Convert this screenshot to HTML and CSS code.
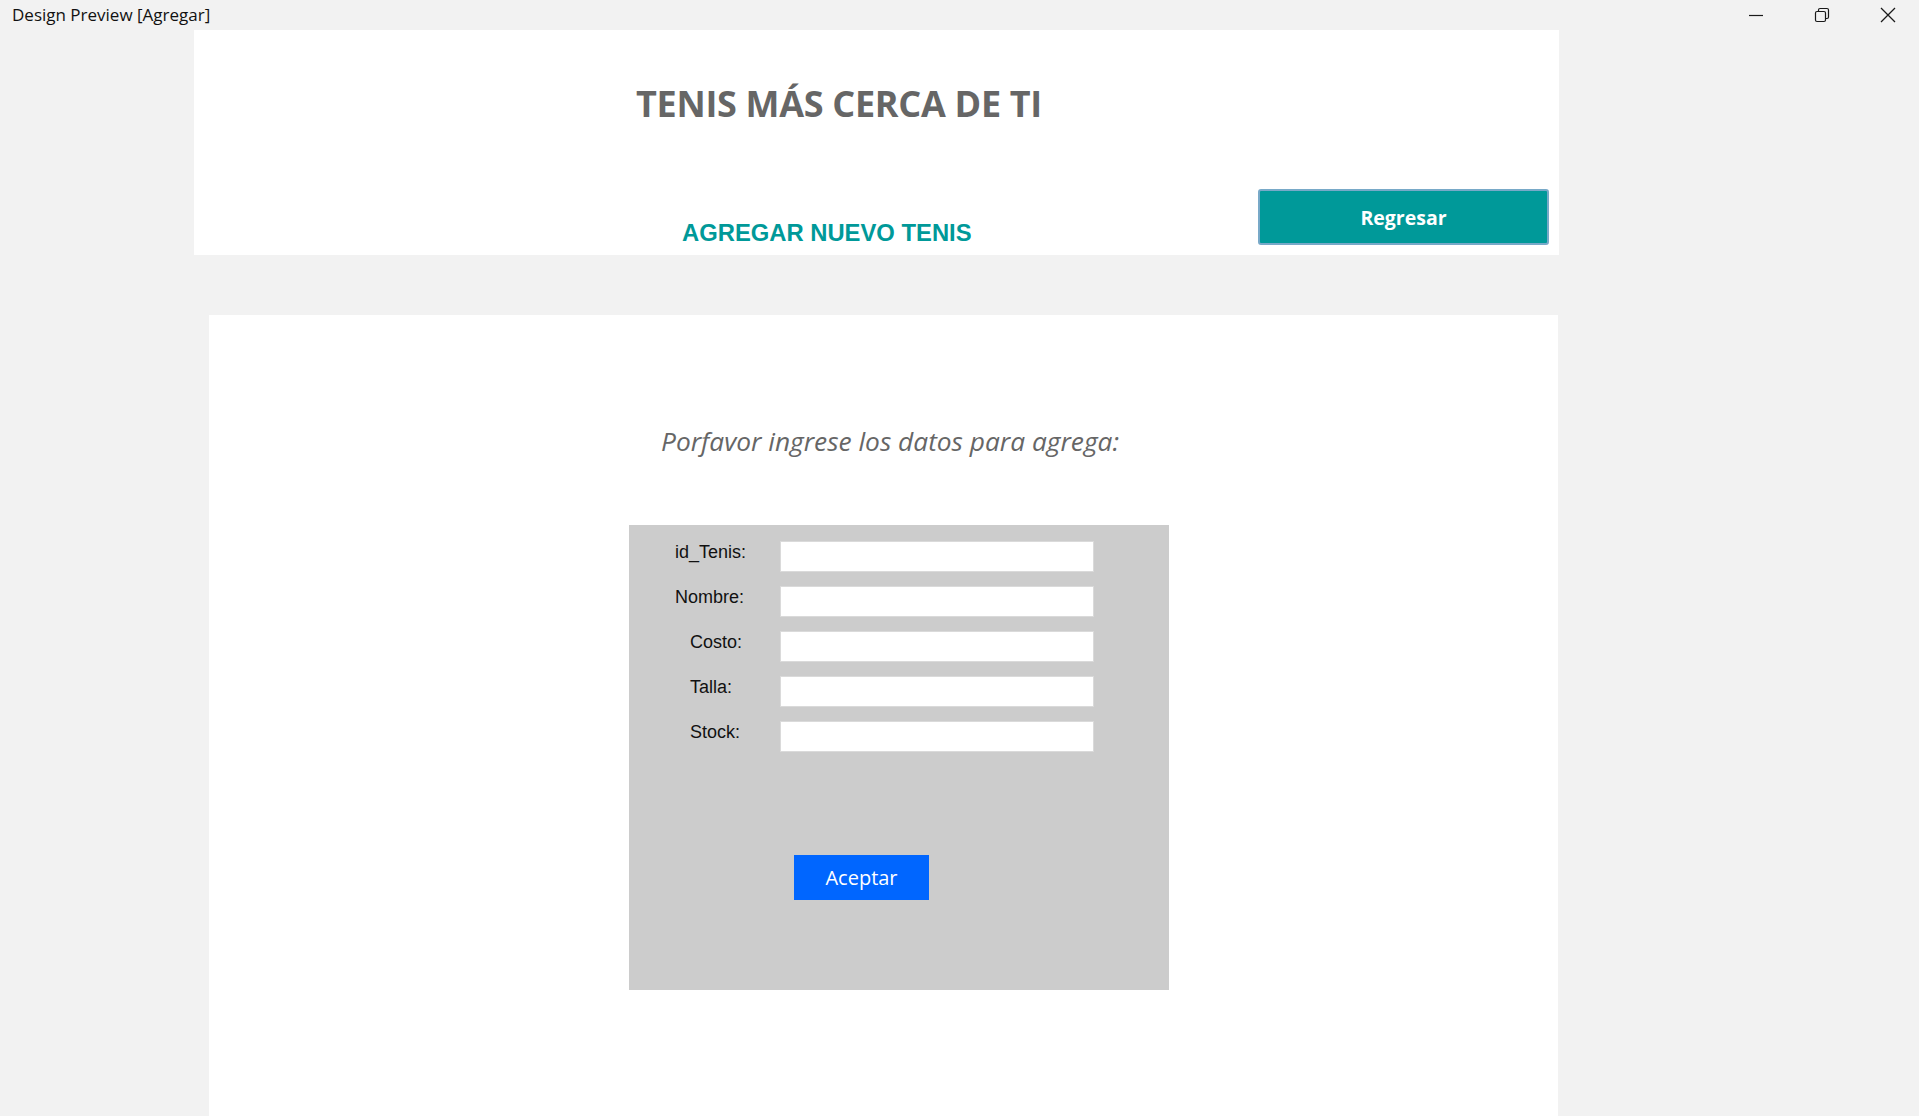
FILE: index.html
```html
<!DOCTYPE html>
<html lang="es">
<head>
<meta charset="utf-8">
<title>Design Preview [Agregar]</title>
<link rel="stylesheet" href="styles.css">
</head>
<body>
<div class="titlebar">
  <span class="titlebar-text">Design Preview [Agregar]</span>
  <div class="win-controls">
    <span class="win-btn">
      <svg width="16" height="16" viewBox="0 0 16 16"><path d="M1 8.5H15" stroke="#1a1a1a" stroke-width="1.2" fill="none"/></svg>
    </span>
    <span class="win-btn">
      <svg width="16" height="16" viewBox="0 0 16 16" fill="none" stroke="#1a1a1a" stroke-width="1.2"><rect x="1.5" y="4.5" width="10" height="10" rx="1.5"/><path d="M4.5 4.5V3a1.5 1.5 0 0 1 1.5-1.5h7A1.5 1.5 0 0 1 14.5 3v7a1.5 1.5 0 0 1-1.5 1.5h-1.5"/></svg>
    </span>
    <span class="win-btn">
      <svg width="16" height="16" viewBox="0 0 16 16"><path d="M1 1L15 15M15 1L1 15" stroke="#1a1a1a" stroke-width="1.3" fill="none"/></svg>
    </span>
  </div>
</div>

<header class="top-panel">
  <h1 class="main-title">TENIS MÁS CERCA DE TI</h1>
  <div class="top-row">
    <h2 class="sub-title">AGREGAR NUEVO TENIS</h2>
    <button class="btn-back" type="button">Regresar</button>
  </div>
</header>

<main class="content-panel">
  <p class="instructions">Porfavor ingrese los datos para agrega:</p>
  <form class="form-box">
    <div class="fields">
      <label class="field-label">id_Tenis:</label>
      <input class="field-input" type="text">
      <label class="field-label">Nombre:</label>
      <input class="field-input" type="text">
      <label class="field-label indent">Costo:</label>
      <input class="field-input" type="text">
      <label class="field-label indent">Talla:</label>
      <input class="field-input" type="text">
      <label class="field-label indent">Stock:</label>
      <input class="field-input" type="text">
    </div>
    <button class="btn-accept" type="button">Aceptar</button>
  </form>
</main>
</body>
</html>
```

FILE: styles.css
```css
html, body {
  margin: 0;
  padding: 0;
}
body {
  background: #f2f2f2;
  width: 1919px;
  height: 1116px;
  overflow: hidden;
  font-family: "Open Sans", "Noto Sans", sans-serif;
}

.titlebar {
  height: 30px;
  display: flex;
  align-items: center;
  justify-content: space-between;
}
.titlebar-text {
  padding-left: 12px;
  font-size: 17px;
  color: #111;
  margin-top: -1px;
}
.win-controls {
  display: flex;
  align-items: center;
  padding-right: 23px;
  gap: 50px;
}
.win-btn {
  display: flex;
  width: 16px;
  height: 16px;
}

.top-panel {
  margin-left: 194px;
  width: 1365px;
  height: 225px;
  background: #ffffff;
  display: flex;
  flex-direction: column;
  justify-content: space-between;
}
.main-title {
  margin: 49px 0 0 0;
  padding-left: 442px;
  font-size: 36px;
  font-weight: 700;
  color: #666666;
  letter-spacing: -0.3px;
}
.top-row {
  display: flex;
  align-items: flex-end;
  padding-bottom: 8px;
}
.sub-title {
  margin: 0;
  padding-left: 488px;
  width: 1064px;
  flex-shrink: 0;
  box-sizing: border-box;
  font-family: "Liberation Sans", Arial, sans-serif;
  font-size: 23.8px;
  font-weight: 700;
  color: #009999;
  line-height: 28px;
  white-space: nowrap;
}
.btn-back {
  width: 291px;
  height: 56px;
  margin-bottom: 2px;
  flex-shrink: 0;
  background: #009999;
  border: 2px solid #78a9c8;
  border-radius: 3px;
  color: #ffffff;
  font-family: "Open Sans", "Noto Sans", sans-serif;
  font-weight: 700;
  font-size: 19.5px;
}

.content-panel {
  margin-top: 60px;
  margin-left: 209px;
  width: 1349px;
  height: 801px;
  background: #ffffff;
  display: flex;
  flex-direction: column;
}
.instructions {
  margin: 109px 0 0 0;
  padding-left: 452px;
  font-style: italic;
  font-size: 26.3px;
  color: #666666;
  line-height: 34px;
}
.form-box {
  margin: 67px 0 0 420px;
  width: 540px;
  height: 465px;
  background: #cccccc;
  box-sizing: border-box;
  padding-top: 16px;
  display: flex;
  flex-direction: column;
}
.fields {
  display: grid;
  grid-template-columns: 151px 314px;
  row-gap: 14px;
  align-items: start;
}
.field-label {
  padding-left: 46px;
  font-family: "Liberation Sans", Arial, sans-serif;
  font-size: 18px;
  line-height: 21px;
  color: #111111;
  padding-top: 1px;
}
.field-label.indent {
  padding-left: 61px;
}
.field-input {
  width: 314px;
  height: 31px;
  box-sizing: border-box;
  margin: 0;
  border: 1px solid #dadada;
  background: #ffffff;
  padding: 0 4px;
}
.btn-accept {
  margin: 103px 0 0 165px;
  width: 135px;
  height: 45px;
  background: #0066ff;
  border: none;
  color: #ffffff;
  font-family: "Open Sans", "Noto Sans", sans-serif;
  font-size: 20px;
}
```
